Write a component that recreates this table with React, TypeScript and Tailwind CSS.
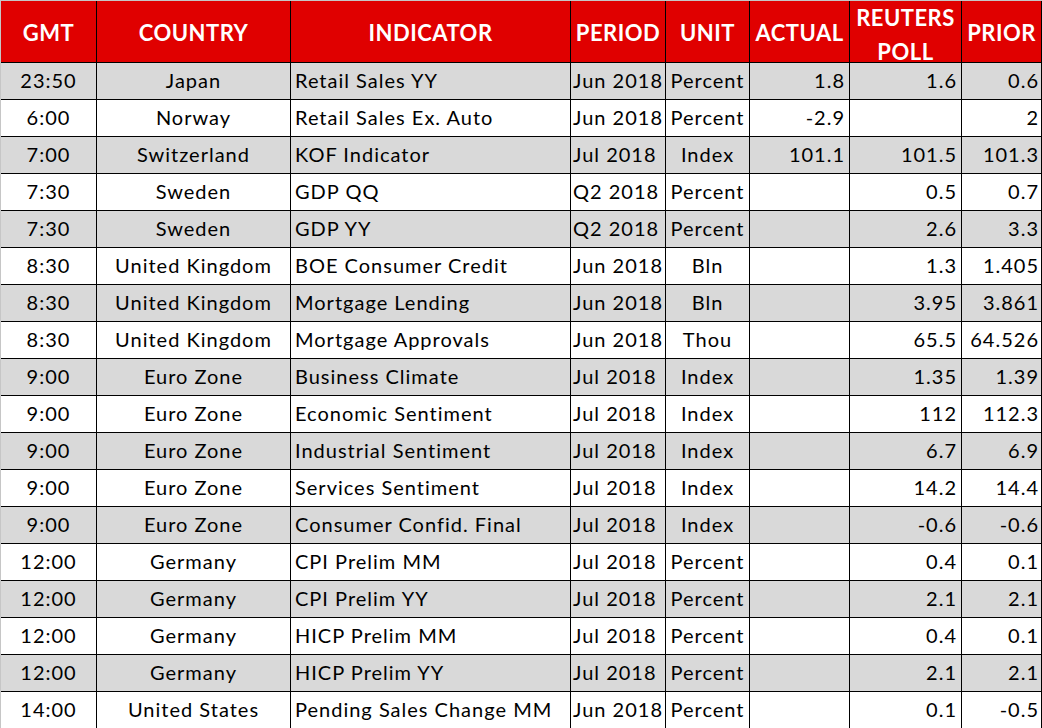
type Row = {
  gmt: string;
  country: string;
  indicator: string;
  period: string;
  unit: string;
  actual: string;
  poll: string;
  prior: string;
};

const rows: Row[] = [
  { gmt: "23:50", country: "Japan", indicator: "Retail Sales YY", period: "Jun 2018", unit: "Percent", actual: "1.8", poll: "1.6", prior: "0.6" },
  { gmt: "6:00", country: "Norway", indicator: "Retail Sales Ex. Auto", period: "Jun 2018", unit: "Percent", actual: "-2.9", poll: "", prior: "2" },
  { gmt: "7:00", country: "Switzerland", indicator: "KOF Indicator", period: "Jul 2018", unit: "Index", actual: "101.1", poll: "101.5", prior: "101.3" },
  { gmt: "7:30", country: "Sweden", indicator: "GDP QQ", period: "Q2 2018", unit: "Percent", actual: "", poll: "0.5", prior: "0.7" },
  { gmt: "7:30", country: "Sweden", indicator: "GDP YY", period: "Q2 2018", unit: "Percent", actual: "", poll: "2.6", prior: "3.3" },
  { gmt: "8:30", country: "United Kingdom", indicator: "BOE Consumer Credit", period: "Jun 2018", unit: "Bln", actual: "", poll: "1.3", prior: "1.405" },
  { gmt: "8:30", country: "United Kingdom", indicator: "Mortgage Lending", period: "Jun 2018", unit: "Bln", actual: "", poll: "3.95", prior: "3.861" },
  { gmt: "8:30", country: "United Kingdom", indicator: "Mortgage Approvals", period: "Jun 2018", unit: "Thou", actual: "", poll: "65.5", prior: "64.526" },
  { gmt: "9:00", country: "Euro Zone", indicator: "Business Climate", period: "Jul 2018", unit: "Index", actual: "", poll: "1.35", prior: "1.39" },
  { gmt: "9:00", country: "Euro Zone", indicator: "Economic Sentiment", period: "Jul 2018", unit: "Index", actual: "", poll: "112", prior: "112.3" },
  { gmt: "9:00", country: "Euro Zone", indicator: "Industrial Sentiment", period: "Jul 2018", unit: "Index", actual: "", poll: "6.7", prior: "6.9" },
  { gmt: "9:00", country: "Euro Zone", indicator: "Services Sentiment", period: "Jul 2018", unit: "Index", actual: "", poll: "14.2", prior: "14.4" },
  { gmt: "9:00", country: "Euro Zone", indicator: "Consumer Confid. Final", period: "Jul 2018", unit: "Index", actual: "", poll: "-0.6", prior: "-0.6" },
  { gmt: "12:00", country: "Germany", indicator: "CPI Prelim MM", period: "Jul 2018", unit: "Percent", actual: "", poll: "0.4", prior: "0.1" },
  { gmt: "12:00", country: "Germany", indicator: "CPI Prelim YY", period: "Jul 2018", unit: "Percent", actual: "", poll: "2.1", prior: "2.1" },
  { gmt: "12:00", country: "Germany", indicator: "HICP Prelim MM", period: "Jul 2018", unit: "Percent", actual: "", poll: "0.4", prior: "0.1" },
  { gmt: "12:00", country: "Germany", indicator: "HICP Prelim YY", period: "Jul 2018", unit: "Percent", actual: "", poll: "2.1", prior: "2.1" },
  { gmt: "14:00", country: "United States", indicator: "Pending Sales Change MM", period: "Jun 2018", unit: "Percent", actual: "", poll: "0.1", prior: "-0.5" },
];

// column widths include each cell's right border
const cols = "grid-cols-[96px_194px_280px_95px_84px_100px_112px_80px]";

const headers = ["GMT", "COUNTRY", "INDICATOR", "PERIOD", "UNIT", "ACTUAL", "REUTERS POLL", "PRIOR"];

export default function App() {
  return (
    <div className="w-[1042px] h-[728px] bg-white font-['Lato','Liberation_Sans',sans-serif] text-black">
      <div className="border-t border-l border-[#c6c6c6]">
        {/* Header */}
        <div className={`grid ${cols} grid-rows-[62px] bg-[#e00000] text-white font-bold text-[22px] leading-[34px] tracking-[0.5px]`}>
          {headers.map((h) => (
            <div
              key={h}
              className="flex items-center justify-center text-center border-r border-b border-black pt-[2px]"
            >
              {h === "REUTERS POLL" ? (
                <span className="mt-1">
                  REUTERS
                  <br />
                  POLL
                </span>
              ) : (
                h
              )}
            </div>
          ))}
        </div>

        {/* Body */}
        {rows.map((r, i) => (
          <div
            key={i}
            className={`grid ${cols} grid-rows-[37px] text-[20px] leading-[24px] tracking-[1px] ${i % 2 === 0 ? "bg-[#d9d9d9]" : "bg-white"}`}
          >
            <div className="flex items-center justify-center pb-[2px] border-r border-b border-black">{r.gmt}</div>
            <div className="flex items-center justify-center pb-[2px] border-r border-b border-black whitespace-nowrap">{r.country}</div>
            <div className="flex items-center pl-1 pb-[2px] border-r border-b border-black whitespace-nowrap">{r.indicator}</div>
            <div className="flex items-center pl-0.5 pb-[2px] border-r border-b border-black whitespace-nowrap">{r.period}</div>
            <div className="flex items-center justify-center pb-[2px] border-r border-b border-black">{r.unit}</div>
            <div className="flex items-center justify-end pr-1 pb-[2px] border-r border-b border-black">{r.actual}</div>
            <div className="flex items-center justify-end pr-1 pb-[2px] border-r border-b border-black">{r.poll}</div>
            <div className="flex items-center justify-end pr-0.5 pb-[2px] border-r border-b border-black">{r.prior}</div>
          </div>
        ))}
      </div>
    </div>
  );
}
